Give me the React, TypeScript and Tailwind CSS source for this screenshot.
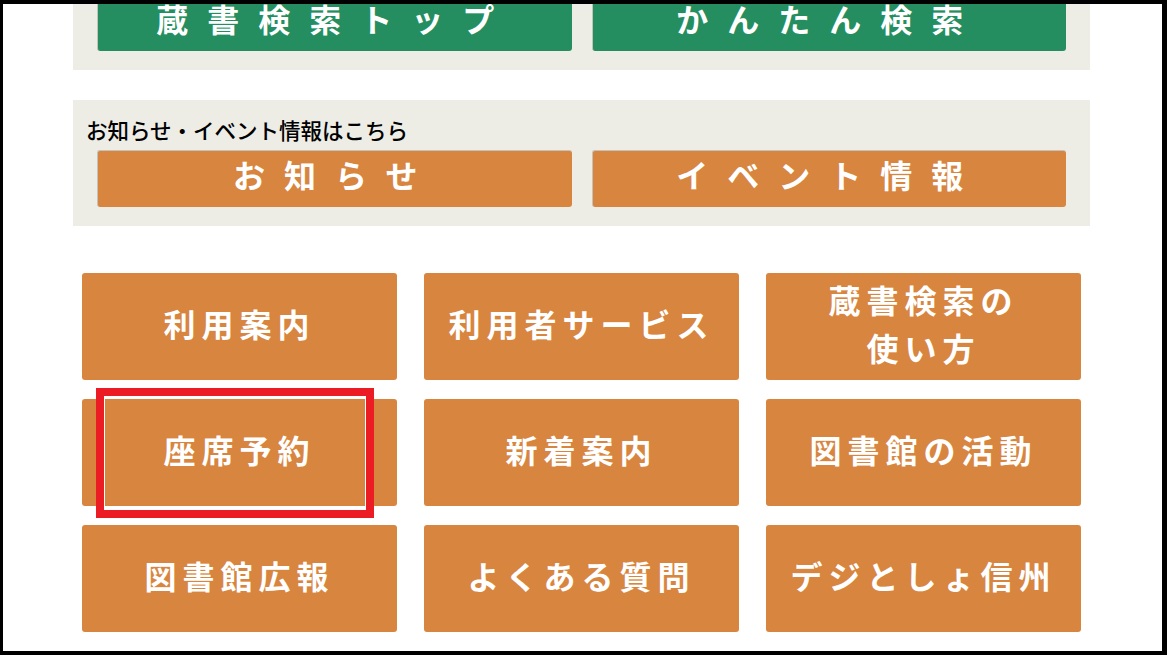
import React from 'react';

const FONT = "font-['Noto_Sans_CJK_JP','Noto_Sans',sans-serif]";

const menu: { label: React.ReactNode; key: string }[] = [
  { key: 'guide', label: '利用案内' },
  { key: 'service', label: '利用者サービス' },
  {
    key: 'howto',
    label: (
      <>
        蔵書検索の
        <br />
        使い方
      </>
    ),
  },
  { key: 'seat', label: '座席予約' },
  { key: 'new', label: '新着案内' },
  { key: 'activity', label: '図書館の活動' },
  { key: 'pr', label: '図書館広報' },
  { key: 'faq', label: 'よくある質問' },
  { key: 'digi', label: 'デジとしょ信州' },
];

function WideButton({ label, color }: { label: string; color: 'green' | 'orange' }) {
  const bg = color === 'green' ? 'bg-[#248e61]' : 'bg-[#d8853f]';
  return (
    <a
      href="#"
      className={`flex h-[57px] items-center justify-center rounded-[3px] border-l border-t border-[#c4c2bb] ${bg} pb-[10px] text-[32px] font-bold leading-none tracking-[19px] text-white`}
    >
      {label}
    </a>
  );
}

export default function App() {
  return (
    <div className={`h-[655px] w-[1167px] bg-black pb-[4px] pl-[3px] pr-[5px] pt-[4px] ${FONT}`}>
      <div className="h-full w-full overflow-hidden bg-white">
        {/* search panel */}
        <div className="ml-[70px] mt-[-20px] w-[1017px] bg-[#edede6] px-[24px] pb-[19px] pt-[10px]">
          <div className="grid grid-cols-2 gap-[20px]">
            <WideButton label="蔵書検索トップ" color="green" />
            <WideButton label="かんたん検索" color="green" />
          </div>
        </div>

        {/* news panel */}
        <div className="ml-[70px] mt-[30px] w-[1017px] bg-[#edede6] pb-[19px] pt-[16px]">
          <p className="mb-[7px] pl-[13px] text-[21.5px] font-medium leading-[27px] text-black">
            お知らせ・イベント情報はこちら
          </p>
          <div className="grid grid-cols-2 gap-[20px] px-[24px]">
            <WideButton label="お知らせ" color="orange" />
            <WideButton label="イベント情報" color="orange" />
          </div>
        </div>

        {/* menu grid */}
        <div className="ml-[79px] mt-[47px] grid w-[999px] grid-cols-3 gap-x-[27px] gap-y-[19px]">
          {menu.map((m) => (
            <div key={m.key} className="relative">
              <a
                href="#"
                className="flex h-[107px] items-center justify-center rounded-[3px] bg-[#d8853f] pb-[8px] text-center text-[32px] font-bold leading-[48px] tracking-[6px] text-white"
              >
                <span>{m.label}</span>
              </a>
              {m.key === 'seat' && (
                <div className="pointer-events-none absolute left-[14px] top-[-11px] h-[130px] w-[278px] border-[8px] border-[#ec1c24] shadow-[inset_0_0_0_1px_white]" />
              )}
            </div>
          ))}
        </div>
      </div>
    </div>
  );
}
